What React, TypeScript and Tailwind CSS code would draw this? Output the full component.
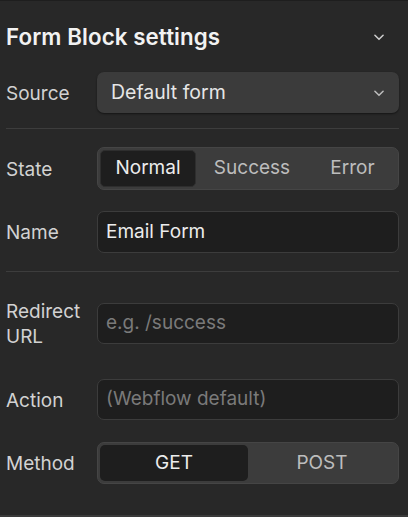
import React from "react";

const Chevron = ({ className = "" }: { className?: string }) => (
  <svg viewBox="0 0 12 12" width="14" height="14" className={className} fill="none">
    <path d="M2.5 4.5 L6 8 L9.5 4.5" stroke="currentColor" strokeWidth="1.3" strokeLinecap="round" strokeLinejoin="round" />
  </svg>
);

function Label({ children }: { children: React.ReactNode }) {
  return <div className="w-[91px] shrink-0 text-[19px] leading-[25px] text-[#d2d2d2] pt-px">{children}</div>;
}

export default function App() {
  return (
    <div className="w-[408px] h-[517px] bg-[#282828] border-t border-[#1e1e1e] border-b-2 border-b-[#3a3a3a] overflow-hidden font-['Inter',sans-serif] flex flex-col pl-[6px] pr-[9px]">
      <div className="h-[71px] flex items-center justify-between">
        <div className="text-[22.3px] font-semibold text-[#f2f2f2] tracking-[0.1px]">Form Block settings</div>
        <Chevron className="text-[#cfcfcf] mr-[13px]" />
      </div>

      <div className="flex items-center h-[41px]">
        <Label>Source</Label>
        <div className="flex-1 h-full rounded-[7px] bg-[#3b3b3b] shadow-[0_1px_2px_rgba(0,0,0,0.5)] flex items-center justify-between pl-[14px] pr-[13px] pt-px">
          <span className="text-[19.5px] text-[#e6e6e6]">Default form</span>
          <Chevron className="text-[#bdbdbd]" />
        </div>
      </div>

      <div className="mt-[15px] h-px bg-[#3d3d3d]" />

      <div className="mt-[18px] flex items-center h-[43px]">
        <Label>State</Label>
        <div className="flex-1 h-full rounded-[7px] bg-[#3c3c3c] border border-[#454545] p-[2px] grid grid-cols-[96px_1fr_1fr] text-[19px]">
          <div className="rounded-[5px] bg-[#1e1e1e] border border-[#2e2e2e] flex items-center justify-center text-[#ececec]">Normal</div>
          <div className="flex items-center justify-center text-[#bdbdbd] pl-[12px]">Success</div>
          <div className="flex items-center justify-center text-[#bdbdbd] pl-[13px]">Error</div>
        </div>
      </div>

      <div className="mt-[21px] flex items-center h-[42px]">
        <Label>Name</Label>
        <div className="flex-1 h-full rounded-[7px] bg-[#1e1e1e] border border-[#3c3c3c] flex items-center pl-[8px] pt-px text-[19px] text-[#ececec]">Email Form</div>
      </div>

      <div className="mt-[18px] h-px bg-[#3d3d3d]" />

      <div className="mt-[31px] flex items-center h-[41px]">
        <Label>
          <div>Redirect</div>
          <div>URL</div>
        </Label>
        <div className="flex-1 h-full rounded-[7px] bg-[#1e1e1e] border border-[#3c3c3c] flex items-center pl-[8px] text-[19px] text-[#7a7a7a]">e.g. /success</div>
      </div>

      <div className="mt-[35px] flex items-center h-[41px]">
        <Label>Action</Label>
        <div className="flex-1 h-full rounded-[7px] bg-[#1e1e1e] border border-[#3c3c3c] flex items-center pl-[8px] text-[19px] text-[#7a7a7a]">(Webflow default)</div>
      </div>

      <div className="mt-[22px] flex items-center h-[42px]">
        <Label>Method</Label>
        <div className="flex-1 h-full rounded-[7px] bg-[#3c3c3c] border border-[#454545] p-[2px] grid grid-cols-2 text-[19px]">
          <div className="rounded-[5px] bg-[#1e1e1e] flex items-center justify-center text-[#ececec]">GET</div>
          <div className="flex items-center justify-center text-[#bdbdbd]">POST</div>
        </div>
      </div>
    </div>
  );
}
